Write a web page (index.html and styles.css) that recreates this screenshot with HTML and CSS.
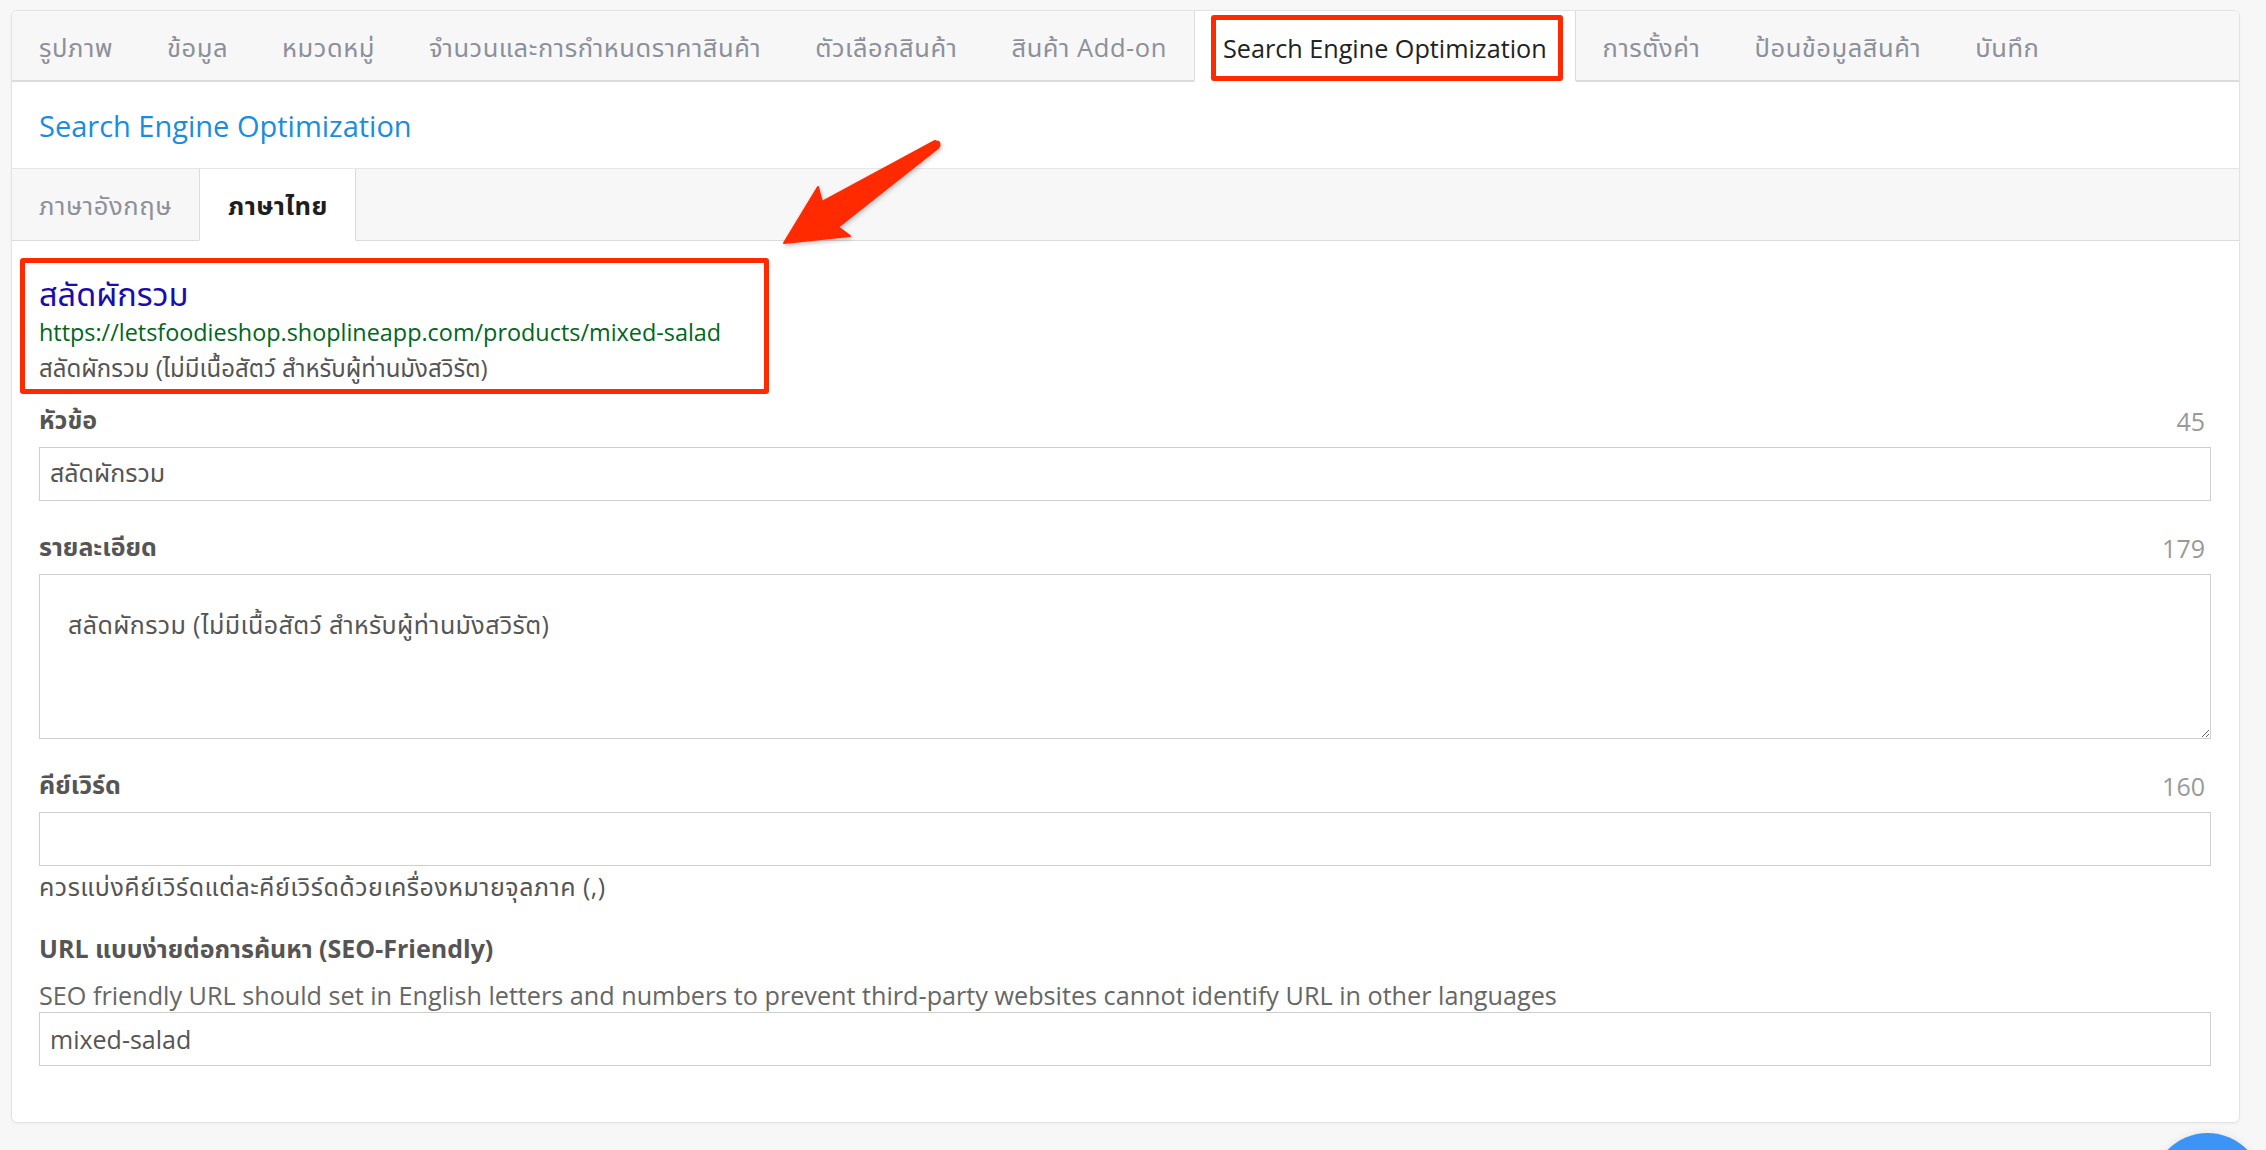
FILE: index.html
```html
<!DOCTYPE html>
<html lang="th">
<head>
<meta charset="utf-8">
<title>Search Engine Optimization</title>
<link rel="stylesheet" href="styles.css">
</head>
<body>
<div class="card">
  <nav class="tabs">
    <div class="tab">รูปภาพ</div>
    <div class="tab">ข้อมูล</div>
    <div class="tab">หมวดหมู่</div>
    <div class="tab">จำนวนและการกำหนดราคาสินค้า</div>
    <div class="tab">ตัวเลือกสินค้า</div>
    <div class="tab">สินค้า Add-on</div>
    <div class="tab active"><span class="mark">Search Engine Optimization</span></div>
    <div class="tab">การตั้งค่า</div>
    <div class="tab">ป้อนข้อมูลสินค้า</div>
    <div class="tab">บันทึก</div>
    <div class="tab-fill"></div>
  </nav>
  <div class="section-head">Search Engine Optimization</div>
  <div class="subtabs">
    <div class="subtab">ภาษาอังกฤษ</div>
    <div class="subtab active">ภาษาไทย</div>
    <div class="subtab-fill"></div>
  </div>
  <div class="body">
    <div class="preview">
      <div class="pv-title">สลัดผักรวม</div>
      <div class="pv-url">https://letsfoodieshop.shoplineapp.com/products/mixed-salad</div>
      <div class="pv-desc">สลัดผักรวม (ไม่มีเนื้อสัตว์ สำหรับผู้ท่านมังสวิรัต)</div>
    </div>

    <div class="field">
      <div class="label-row"><span class="label">หัวข้อ</span><span class="count">45</span></div>
      <input class="input" type="text" value="สลัดผักรวม">
    </div>

    <div class="field">
      <div class="label-row"><span class="label">รายละเอียด</span><span class="count">179</span></div>
      <textarea class="textarea">สลัดผักรวม (ไม่มีเนื้อสัตว์ สำหรับผู้ท่านมังสวิรัต)</textarea>
    </div>

    <div class="field">
      <div class="label-row"><span class="label">คีย์เวิร์ด</span><span class="count">160</span></div>
      <input class="input" type="text" value="">
      <div class="help">ควรแบ่งคีย์เวิร์ดแต่ละคีย์เวิร์ดด้วยเครื่องหมายจุลภาค (,)</div>
    </div>

    <div class="field last">
      <div class="label-row url-label"><span class="label">URL แบบง่ายต่อการค้นหา (SEO-Friendly)</span></div>
      <div class="desc">SEO friendly URL should set in English letters and numbers to prevent third-party websites cannot identify URL in other languages</div>
      <input class="input" type="text" value="mixed-salad">
    </div>
  </div>
</div>

<svg class="arrow" viewBox="0 0 180 120" width="180" height="120" aria-hidden="true">
  <polygon points="165,11 52,72 48,57 14,113 80,106 68,97 168,18" fill="#ff2a00" stroke="#ff2a00" stroke-width="2" stroke-linejoin="round"/>
  <circle cx="166.5" cy="14.5" r="4" fill="#ff2a00"/>
</svg>

<div class="chat-btn"></div>
</body>
</html>
```

FILE: styles.css
```css
html, body {
  margin: 0;
  padding: 0;
}
body {
  background: #f7f7f7;
  font-family: "Open Sans", "Noto Sans Thai", "Noto Sans", sans-serif;
  color: #555;
  width: 2266px;
  height: 1150px;
  overflow: hidden;
  position: relative;
}
.card {
  margin: 10px 0 0 11px;
  width: 2229px;
  box-sizing: border-box;
  background: #fff;
  border: 1px solid #e3e3e3;
  border-radius: 6px;
  overflow: hidden;
  box-shadow: 0 1px 3px rgba(0,0,0,0.04);
}
.tabs {
  display: flex;
  height: 71px;
  background: #f7f7f7;
}
.tab {
  display: flex;
  align-items: center;
  padding: 6px 27px 0;
  font-size: 25.5px;
  letter-spacing: 0.55px;
  color: #8c909b;
  white-space: nowrap;
  border-bottom: 2px solid #dcdcdc;
  box-sizing: border-box;
}
.tab.active {
  background: #fff;
  color: #222;
  font-size: 25.2px;
  letter-spacing: 0;
  border-left: 1px solid #dcdcdc;
  border-right: 1px solid #dcdcdc;
  border-bottom-color: transparent;
  padding: 4px 12px 0 16px;
  align-items: flex-start;
}
.mark {
  display: flex;
  align-items: center;
  height: 66px;
  box-sizing: border-box;
  border: 5px solid #ff2a00;
  border-radius: 3px;
  padding: 0 11px 0 7px;
}
.tab-fill {
  flex: 1;
  border-bottom: 2px solid #dcdcdc;
}
.section-head {
  height: 86px;
  display: flex;
  align-items: center;
  padding-left: 27px;
  font-size: 29px;
  color: #1a8ddb;
  border-bottom: 1px solid #e6e6e6;
}
.subtabs {
  display: flex;
  height: 72px;
  background: #f7f7f7;
}
.subtab {
  display: flex;
  align-items: center;
  padding: 5px 27px 0;
  font-size: 25.5px;
  letter-spacing: 0.6px;
  color: #8c909b;
  border-bottom: 1px solid #dcdcdc;
  box-sizing: border-box;
}
.subtab.active {
  background: #fff;
  color: #1e1e1e;
  font-weight: 700;
  letter-spacing: 0.4px;
  border-left: 1px solid #dcdcdc;
  border-right: 1px solid #dcdcdc;
  border-bottom-color: transparent;
  padding: 5px 27px 0 28px;
}
.subtab-fill {
  flex: 1;
  border-bottom: 1px solid #dcdcdc;
}
.body {
  padding: 17px 28px 56px 27px;
}
.preview {
  width: 749px;
  margin-left: -19px;
  box-sizing: border-box;
  border: 5px solid #ff2a00;
  border-radius: 3px;
  padding: 11px 14px 5px 14px;
}
.pv-title {
  font-size: 32.5px;
  line-height: 40px;
  color: #1a0dab;
}
.pv-url {
  font-size: 23.4px;
  line-height: 37px;
  color: #006621;
}
.pv-desc {
  font-size: 24px;
  line-height: 33px;
  color: #545454;
}
.field {
  margin-top: 10px;
}
.field + .field {
  margin-top: 30px;
}
.label-row {
  display: flex;
  justify-content: space-between;
  align-items: center;
  height: 34px;
  margin-bottom: 9px;
  padding-right: 6px;
}
.label {
  font-weight: 700;
  font-size: 25px;
  color: #555;
}
.count {
  font-size: 25px;
  color: #999;
}
.input {
  display: block;
  width: 100%;
  height: 54px;
  box-sizing: border-box;
  border: 1px solid #cfcfcf;
  border-radius: 0;
  padding: 0 10px;
  font-family: inherit;
  font-size: 25px;
  color: #555;
  background: #fff;
  outline: none;
}
.textarea {
  display: block;
  width: 100%;
  height: 165px;
  box-sizing: border-box;
  border: 1px solid #cfcfcf;
  border-radius: 0;
  padding: 32px 28px;
  font-family: inherit;
  font-size: 25px;
  letter-spacing: 0.4px;
  line-height: 34px;
  color: #555;
  background: #fff;
  resize: vertical;
  outline: none;
}
.help {
  font-size: 25px;
  letter-spacing: 0.5px;
  line-height: 34px;
  margin-top: 3px;
  color: #555;
}
.url-label {
  margin-bottom: 11px;
}
.desc {
  font-size: 25.2px;
  line-height: 34px;
  color: #666;
}
.arrow {
  position: absolute;
  left: 770px;
  top: 130px;
  filter: drop-shadow(1px 2px 2px rgba(0,0,0,0.25));
}
.chat-btn {
  position: absolute;
  left: 2152px;
  top: 1133px;
  width: 111px;
  height: 111px;
  border-radius: 50%;
  background: #3c95f6;
  box-shadow: 0 0 10px rgba(0,0,0,0.08);
}
```
